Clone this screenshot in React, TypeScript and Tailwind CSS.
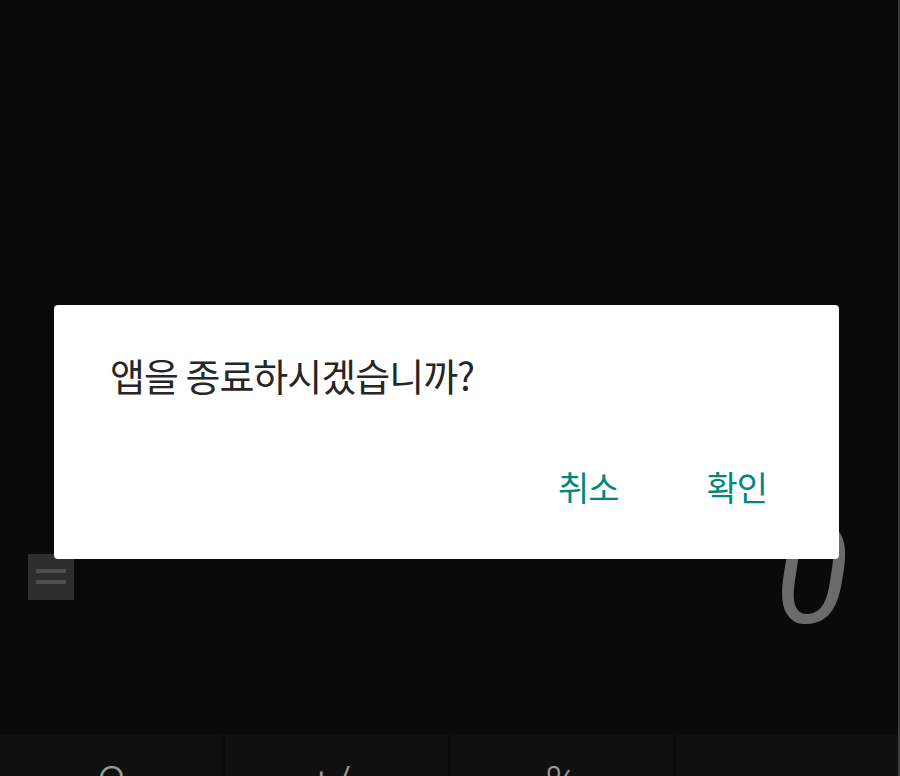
import React from "react";

const keys = ["C", "+/-", "%", ""];

const App = () => {
  return (
    <div className="relative flex flex-row w-[900px] h-[776px] overflow-hidden bg-[#0a0a0a]" style={{ fontFamily: "Roboto, 'Noto Sans CJK KR', sans-serif" }}>
      <div className="flex flex-col flex-1">
        <div className="flex flex-row shrink-0 items-center justify-between h-[735px] pt-[418px] pl-[28px] pr-[49px]">
          <div className="flex flex-col items-center justify-center gap-[7px] w-[46px] h-[46px] bg-[#2e2e2e]">
            <span className="block w-[30px] h-[4px] bg-[#4f4f4f]" />
            <span className="block w-[30px] h-[4px] bg-[#4f4f4f]" />
          </div>
          <span className="text-[136px] leading-none italic font-normal text-[#6b6b6b]">0</span>
        </div>
        <div className="flex flex-row flex-1 gap-[3px] bg-[#0a0a0a]">
          {keys.map((k, i) => (
            <div key={i} className="flex flex-1 justify-center pt-[26px] bg-[#101010]">
              <span className="text-[44px] leading-none font-light text-[#9a9a9a]">{k}</span>
            </div>
          ))}
        </div>
      </div>
      <div className="w-[2px] h-full bg-[#3c3c3c]" />

      <div className="absolute left-[54px] top-[305px] w-[785px] h-[254px] bg-white rounded-[4px] flex flex-col pl-[56px] pr-[72px]" style={{ fontFamily: "'Noto Sans CJK KR', sans-serif" }}>
        <div className="pt-[42px] text-[38px] leading-[56px] text-[#262626] tracking-[-1px]">앱을 종료하시겠습니까?</div>
        <div className="flex flex-row justify-end gap-[88px] mt-auto pb-[46px] text-[34px] leading-[52px] text-[#00897b] tracking-[-1px]">
          <span>취소</span>
          <span>확인</span>
        </div>
      </div>
    </div>
  );
};

export default App;
